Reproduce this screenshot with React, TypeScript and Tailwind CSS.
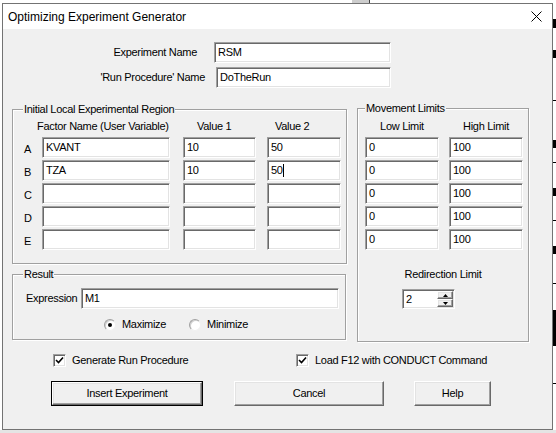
import React from 'react';

const sunken =
  'bg-white border border-t-[#a0a0a0] border-l-[#a0a0a0] border-b-white border-r-white shadow-[inset_1px_1px_0_#696969,inset_-1px_-1px_0_#e3e3e3]';
const raised =
  'bg-[#f0f0f0] border border-t-white border-l-white border-b-[#696969] border-r-[#696969] shadow-[inset_-1px_-1px_0_#a0a0a0,inset_1px_1px_0_#e3e3e3]';
const frame =
  'relative border border-[#a0a0a0] shadow-[1px_1px_0_#fff,inset_1px_1px_0_#fff]';

function Field({ value = '', className = '', caret = false }: { value?: string; className?: string; caret?: boolean }) {
  return (
    <div className={`${sunken} ${className} h-[21px] flex items-center pl-[3px] text-[11px] text-black`}>
      <span>{value}</span>
      {caret && <span className="w-[1px] h-[13px] bg-black" />}
    </div>
  );
}

function Legend({ children, className = '' }: { children: React.ReactNode; className?: string }) {
  return (
    <span className={`absolute -top-[7px] px-[1px] bg-[#f0f0f0] leading-[13px] ${className}`}>{children}</span>
  );
}

function Check({ label }: { label: string }) {
  return (
    <div className="flex items-center gap-[6px]">
      <div className={`${sunken} w-[13px] h-[13px] flex items-center justify-center`}>
        <svg width="9" height="9" viewBox="0 0 9 9">
          <path d="M1 4 L3.5 6.5 L8 1.5" stroke="#000" strokeWidth="1.6" fill="none" />
        </svg>
      </div>
      <span>{label}</span>
    </div>
  );
}

function Radio({ label, on = false }: { label: string; on?: boolean }) {
  return (
    <div className="flex items-center gap-[6px]">
      <div className="w-[12px] h-[12px] rounded-full bg-white border border-t-[#a0a0a0] border-l-[#a0a0a0] border-b-[#f0f0f0] border-r-[#f0f0f0] shadow-[inset_1px_1px_0_#d0d0d0] flex items-center justify-center">
        {on && <div className="w-[4px] h-[4px] rounded-full bg-black" />}
      </div>
      <span>{label}</span>
    </div>
  );
}

export default function App() {
  const factors = [
    { l: 'A', name: 'KVANT', v1: '10', v2: '50' },
    { l: 'B', name: 'TZA', v1: '10', v2: '50', caret: true },
    { l: 'C', name: '', v1: '', v2: '' },
    { l: 'D', name: '', v1: '', v2: '' },
    { l: 'E', name: '', v1: '', v2: '' },
  ];

  return (
    <div className="relative w-[556px] h-[433px] bg-white overflow-hidden font-['Liberation_Sans',Arial,sans-serif] text-[11px] tracking-[-0.3px] text-black">
      {/* bits of the window behind */}
      <div className="absolute left-[352px] top-0 w-[17px] h-[3px] bg-[#cdcdcd]" />
      <div className="absolute left-[369px] top-0 w-[1px] h-[3px] bg-[#444]" />
      <div className="absolute left-[352px] bottom-0 w-[17px] h-[3px] bg-[#cdcdcd]" />
      <div className="absolute left-[369px] bottom-0 w-[1px] h-[3px] bg-[#444]" />
      <div className="absolute left-[0px] top-[430px] w-[556px] h-[3px] bg-[#e4e4e4]" />
      <div className="absolute left-[553px] top-[19px] w-[3px] h-[9px] bg-black" />
      <div className="absolute left-[553px] top-[50px] w-[3px] h-[8px] bg-black" />
      <div className="absolute left-[545px] top-[100px] w-[11px] h-[1px] bg-black" />
      <div className="absolute left-[553px] top-[140px] w-[3px] h-[8px] bg-black" />
      <div className="absolute left-[545px] top-[162px] w-[11px] h-[1px] bg-black" />
      <div className="absolute left-[553px] top-[188px] w-[3px] h-[8px] bg-black" />
      <div className="absolute left-[545px] top-[220px] w-[11px] h-[1px] bg-black" />
      <div className="absolute left-[553px] top-[246px] w-[3px] h-[8px] bg-black" />
      <div className="absolute left-[545px] top-[283px] w-[11px] h-[1px] bg-black" />
      <div className="absolute left-[553px] top-[310px] w-[3px] h-[36px] bg-black" />
      <div className="absolute left-[553px] top-[383px] w-[3px] h-[1px] bg-black" />

      {/* dialog */}
      <div className="relative ml-[2px] mt-[3px] w-[551px] h-[427px] border border-[#737373] bg-[#f0f0f0] flex flex-col">
        <div className="h-[25px] bg-white flex items-center justify-between pl-[5px] pr-[10px]">
          <span className="text-[12px] tracking-normal">Optimizing Experiment Generator</span>
          <svg width="11" height="11" viewBox="0 0 11 11">
            <path d="M0.5 0.5 L10.5 10.5 M10.5 0.5 L0.5 10.5" stroke="#000" strokeWidth="1" />
          </svg>
        </div>

        <div className="flex flex-col">
          <div className="mt-[13px] flex items-center">
            <span className="w-[194px] text-right">Experiment Name</span>
            <Field value="RSM" className="ml-[17px] w-[177px]" />
          </div>
          <div className="mt-[4px] flex items-center">
            <span className="w-[202px] text-right">'Run Procedure' Name</span>
            <Field value="DoTheRun" className="ml-[11px] w-[175px]" />
          </div>

          <div className="mt-[20px] ml-[9px] flex items-start">
            <div className="flex flex-col">
              {/* Initial Local Experimental Region */}
              <div className={`${frame} mt-[1px] w-[335px] h-[155px] pt-[10px]`}>
                <Legend className="left-[10px]">Initial Local Experimental Region</Legend>
                <div className="flex leading-[13px]">
                  <span className="ml-[24px] w-[160px]">Factor Name (User Variable)</span>
                  <span className="w-[78px]">Value 1</span>
                  <span>Value 2</span>
                </div>
                <div className="mt-[4px] flex flex-col gap-[2px]">
                  {factors.map((f) => (
                    <div key={f.l} className="flex items-center">
                      <span className="w-[29px] pl-[11px] pt-[3px]">{f.l}</span>
                      <Field value={f.name} className="w-[128px]" />
                      <Field value={f.v1} className="ml-[13px] w-[73px]" />
                      <Field value={f.v2} caret={f.caret} className="ml-[11px] w-[74px]" />
                    </div>
                  ))}
                </div>
              </div>

              {/* Result */}
              <div className={`${frame} mt-[10px] w-[334px] h-[66px] pt-[13px]`}>
                <Legend className="left-[10px]">Result</Legend>
                <div className="flex items-center pl-[13px]">
                  <span>Expression</span>
                  <Field value="M1" className="ml-auto mr-[6px] w-[258px] h-[20px]" />
                </div>
                <div className="mt-[9px] pl-[91px] flex items-center gap-[23px] leading-[13px]">
                  <Radio label="Maximize" on />
                  <Radio label="Minimize" />
                </div>
              </div>
            </div>

            {/* Movement Limits */}
            <div className={`${frame} ml-[10px] w-[172px] h-[234px] pt-[11px]`}>
              <Legend className="left-[7px]">Movement Limits</Legend>
              <div className="flex pl-[7px] gap-[10px] leading-[13px]">
                <span className="w-[74px] text-center">Low Limit</span>
                <span className="w-[74px] text-center">High Limit</span>
              </div>
              <div className="mt-[4px] flex flex-col gap-[2px] pl-[7px]">
                {[0, 1, 2, 3, 4].map((i) => (
                  <div key={i} className="flex gap-[10px]">
                    <Field value="0" className="w-[74px]" />
                    <Field value="100" className="w-[74px]" />
                  </div>
                ))}
              </div>
              <div className="mt-[18px] text-center leading-[13px]">Redirection Limit</div>
              <div className={`${sunken} mt-[8px] ml-[44px] w-[53px] h-[20px] flex items-center`}>
                <span className="pl-[3px] flex-1">2</span>
                <div className="flex flex-col w-[17px] h-full py-[1px] pr-[1px]">
                  <div className={`${raised} flex-1 flex items-center justify-center`}>
                    <svg width="5" height="3" viewBox="0 0 5 3"><path d="M2.5 0 L5 3 L0 3 Z" fill="#000" /></svg>
                  </div>
                  <div className={`${raised} flex-1 flex items-center justify-center`}>
                    <svg width="5" height="3" viewBox="0 0 5 3"><path d="M0 0 L5 0 L2.5 3 Z" fill="#000" /></svg>
                  </div>
                </div>
              </div>
            </div>
          </div>

          <div className="mt-[10px] flex items-center">
            <div className="ml-[50px] w-[243px]">
              <Check label="Generate Run Procedure" />
            </div>
            <Check label="Load F12 with CONDUCT Command" />
          </div>

          <div className="mt-[12px] flex items-center">
            <div className="ml-[48px] w-[152px] h-[25px] border border-black">
              <button className={`${raised} w-full h-full`}>Insert Experiment</button>
            </div>
            <button className={`${raised} ml-[31px] w-[150px] h-[25px]`}>Cancel</button>
            <button className={`${raised} ml-[30px] w-[77px] h-[25px]`}>Help</button>
          </div>
        </div>
      </div>
    </div>
  );
}
